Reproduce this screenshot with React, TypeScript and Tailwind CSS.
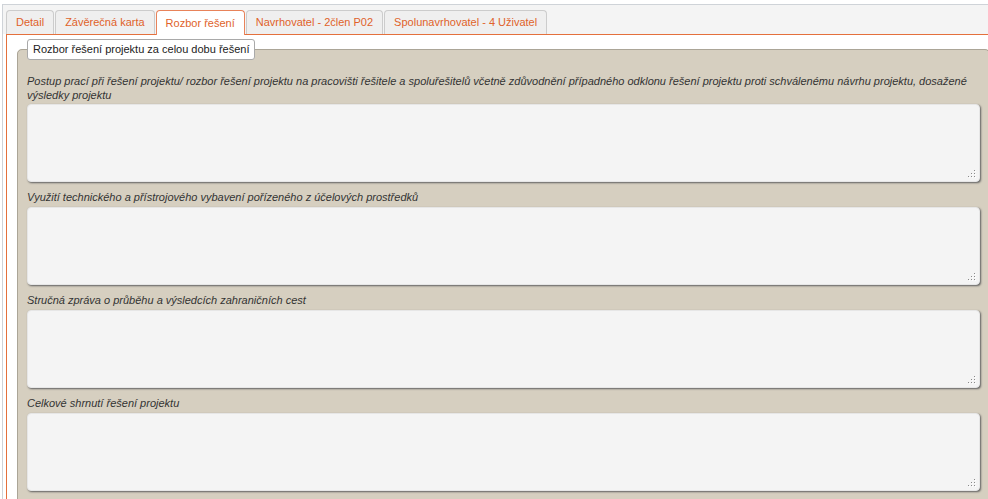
const tabs = [
  { label: 'Detail', active: false },
  { label: 'Závěrečná karta', active: false },
  { label: 'Rozbor řešení', active: true },
  { label: 'Navrhovatel - 2člen P02', active: false },
  { label: 'Spolunavrhovatel - 4 Uživatel', active: false },
]

const fields = [
  'Postup prací při řešení projektu/ rozbor řešení projektu na pracovišti řešitele a spoluřešitelů včetně zdůvodnění případného odklonu řešení projektu proti schválenému návrhu projektu, dosažené výsledky projektu',
  'Využití technického a přístrojového vybavení pořízeného z účelových prostředků',
  'Stručná zpráva o průběhu a výsledcích zahraničních cest',
  'Celkové shrnutí řešení projektu',
]

// dotted resize grip in the textarea corner
function Grip() {
  const dots: [number, number][] = [
    [6, 0], [6, 3], [3, 3], [6, 6], [3, 6], [0, 6],
  ]
  return (
    <svg width="9" height="9" viewBox="0 0 9 9" className="absolute right-[3px] bottom-[3px] pointer-events-none">
      {dots.map(([x, y], i) => (
        <g key={i}>
          <rect x={x + 1} y={y + 1} width="1" height="1" fill="#ffffff" />
          <rect x={x} y={y} width="1" height="1" fill="#8a8a8a" />
        </g>
      ))}
    </svg>
  )
}

export default function App() {
  return (
    <div className="w-[988px] h-[499px] overflow-hidden bg-white font-['Liberation_Sans',Arial,sans-serif] text-[11px]">
      <div className="mt-[4px] ml-[2px] w-[1000px] h-[600px] border-t border-l border-[#cfd3d8] bg-white">
        {/* tab header */}
        <div className="bg-[#f4f4f4] pt-[5px] pl-[3px] flex items-end gap-[1px]">
          {tabs.map(t => (
            <div
              key={t.label}
              className={
                t.active
                  ? 'relative -mb-[1px] h-[25px] px-[9px] flex items-center rounded-t-[4px] border border-b-0 border-[#e8835a] bg-white text-[#e0622a] leading-[13px]'
                  : 'h-[24px] px-[9px] flex items-center rounded-t-[4px] border border-b-0 border-[#cccccc] bg-[#efefef] text-[#e0622a] leading-[13px]'
              }
            >
              {t.label}
            </div>
          ))}
        </div>

        {/* panel */}
        <div className="ml-[3px] border-t border-l border-[#e4703c] bg-white pl-[10px] pt-[4px]">
          <fieldset className="w-[973px] rounded-[5px] border border-[#aba597] bg-[#d6cfc0] px-[9px] pt-[14px] pb-[20px]">
            <legend className="ml-0 rounded-[3px] border border-[#a9a9a9] bg-white px-[5px] py-[3px] text-[11px] leading-[13px] text-[#222]">
              Rozbor řešení projektu za celou dobu řešení
            </legend>
            {fields.map((f, i) => (
              <div key={i} className={i === 0 ? '' : 'mt-[8px]'}>
                <div className="italic text-[11px] leading-[14px] text-[#333]">{f}</div>
                <div className={`${i === 0 ? 'mt-[2px]' : 'mt-[3px]'} relative`}>
                  <textarea className="block w-full h-[78px] resize-none rounded-[4px] border border-[#e6e6e6] bg-[#f4f4f4] shadow-[1px_1px_2px_#5f5f5f] outline-none" />
                  <Grip />
                </div>
              </div>
            ))}
          </fieldset>
        </div>
      </div>
    </div>
  )
}
